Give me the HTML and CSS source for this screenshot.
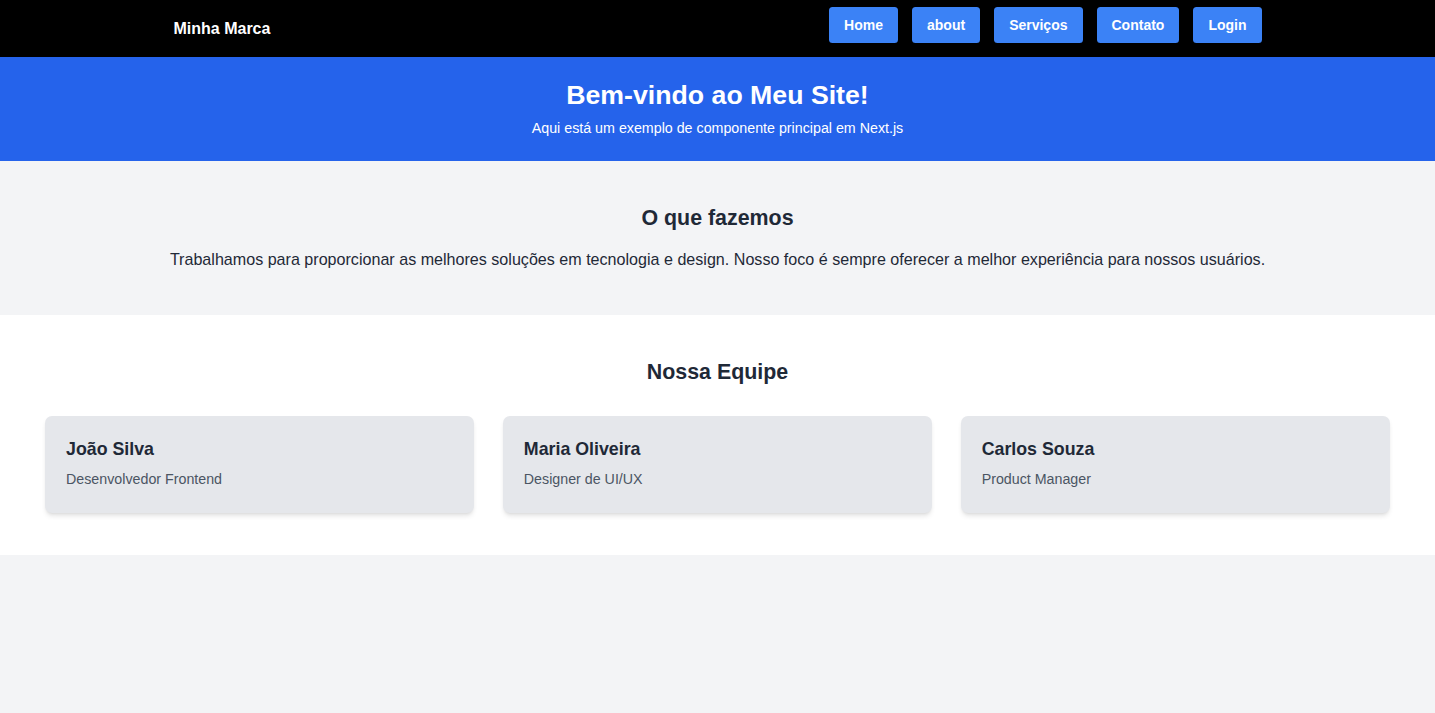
FILE: index.html
```html
<!DOCTYPE html>
<html lang="pt">
<head>
<meta charset="utf-8">
<title>Minha Marca</title>
<link rel="stylesheet" href="styles.css">
</head>
<body>
<header class="navbar">
  <div class="nav-inner">
    <div class="brand">Minha Marca</div>
    <nav class="nav-links">
      <a class="nav-btn" href="#">Home</a>
      <a class="nav-btn" href="#">about</a>
      <a class="nav-btn" href="#">Serviços</a>
      <a class="nav-btn" href="#">Contato</a>
      <a class="nav-btn" href="#">Login</a>
    </nav>
  </div>
</header>
<section class="hero">
  <h1 class="hero-title">Bem-vindo ao Meu Site!</h1>
  <p class="hero-sub">Aqui está um exemplo de componente principal em Next.js</p>
</section>
<section class="about">
  <h2 class="section-title">O que fazemos</h2>
  <p class="about-text">Trabalhamos para proporcionar as melhores soluções em tecnologia e design. Nosso foco é sempre oferecer a melhor experiência para nossos usuários.</p>
</section>
<section class="team">
  <h2 class="section-title">Nossa Equipe</h2>
  <div class="team-grid">
    <div class="card"><h3 class="card-name">João Silva</h3><p class="card-role">Desenvolvedor Frontend</p></div>
    <div class="card"><h3 class="card-name">Maria Oliveira</h3><p class="card-role">Designer de UI/UX</p></div>
    <div class="card"><h3 class="card-name">Carlos Souza</h3><p class="card-role">Product Manager</p></div>
  </div>
</section>
</body>
</html>
```
FILE: styles.css
```css
* { box-sizing: border-box; }
html, body { margin: 0; padding: 0; }
body {
  font-family: "Liberation Sans", Arial, sans-serif;
  background: #f3f4f6;
  color: #1f2937;
}
.navbar {
  background: #000;
  height: 57px;
}
.nav-inner {
  max-width: 1088px;
  margin: 0 auto;
  display: flex;
  justify-content: space-between;
  align-items: flex-start;
  height: 57px;
}
.brand {
  color: #fff;
  font-weight: 700;
  font-size: 16px;
  line-height: 24px;
  margin-top: 16.5px;
}
.nav-links {
  display: flex;
  gap: 14px;
  margin-top: 7px;
}
.nav-btn {
  display: block;
  background: #3b82f6;
  color: #fff;
  text-decoration: none;
  font-weight: 700;
  font-size: 14px;
  line-height: 36px;
  height: 36px;
  padding: 0 15px;
  border-radius: 3.5px;
}
.hero {
  background: #2563eb;
  color: #fff;
  text-align: center;
  padding: 22px 16px;
}
.hero-title {
  margin: 0;
  font-size: 26.7px;
  line-height: 32px;
  font-weight: 700;
}
.hero-sub {
  margin: 7px 0 0;
  font-size: 14.25px;
  line-height: 21px;
}
.about {
  background: #f3f4f6;
  text-align: center;
  padding: 43px 16px;
}
.section-title {
  margin: 0;
  font-size: 21.4px;
  line-height: 28px;
  font-weight: 700;
  color: #1f2937;
}
.about-text {
  margin: 14px 0 0;
  font-size: 16.1px;
  line-height: 26px;
  color: #1f2937;
}
.team {
  background: #fff;
  padding: 43px 45px 42px;
}
.team .section-title { text-align: center; }
.team-grid {
  margin-top: 30px;
  display: grid;
  grid-template-columns: repeat(3, 1fr);
  gap: 28.5px;
}
.card {
  background: #e5e7eb;
  border-radius: 7px;
  padding: 21px 21px 23px;
  box-shadow: 0 3.5px 5.5px -1px rgba(0,0,0,0.1), 0 2px 3.5px -2px rgba(0,0,0,0.1);
}
.card-name {
  margin: 0;
  font-size: 17.8px;
  line-height: 25px;
  font-weight: 700;
  color: #1f2937;
}
.card-role {
  margin: 6px 0 0;
  font-size: 14.25px;
  line-height: 22px;
  color: #4b5563;
}
```
